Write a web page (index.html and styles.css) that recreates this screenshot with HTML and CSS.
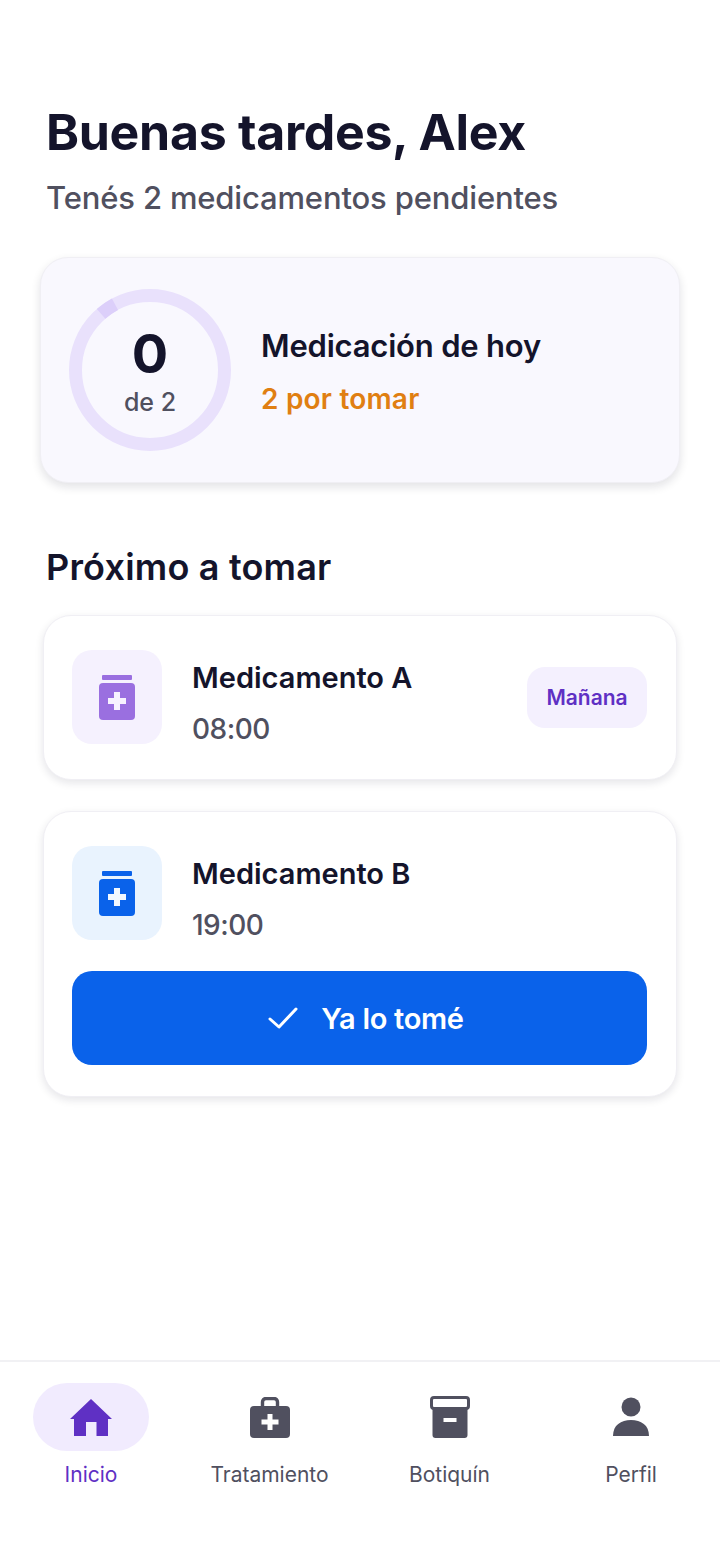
FILE: index.html
```html
<!DOCTYPE html>
<html lang="es">

<head>
  <meta charset="UTF-8" />
  <meta name="viewport" content="width=device-width, initial-scale=1.0" />
  <title>Inicio</title>
  <link rel="stylesheet" href="styles.css">
</head>

<body>
  <div class="page">
    <main class="main">
      <header class="header">
        <h1>Buenas tardes, Alex</h1>
        <p class="subtitle">Tenés 2 medicamentos pendientes</p>
      </header>

      <section class="summary">
        <div class="ring">
          <svg class="ring-svg" viewBox="0 0 162 162" width="162" height="162">
            <circle cx="81" cy="81" r="74.5" fill="none" stroke="#e9e1fc" stroke-width="13" />
            <path d="M32.1 24.8 A74.5 74.5 0 0 1 46 15.2" fill="none" stroke="#dccffa" stroke-width="13" />
          </svg>
          <div class="ring-text">
            <span class="ring-num">0</span>
            <span class="ring-of">de 2</span>
          </div>
        </div>
        <div class="summary-text">
          <h2>Medicación de hoy</h2>
          <p class="pending">2 por tomar</p>
        </div>
      </section>

      <h2 class="section-title">Próximo a tomar</h2>

      <section class="card">
        <div class="med">
          <div class="med-icon purple">
            <svg viewBox="0 0 36 46" width="36" height="46">
              <rect x="3" y="1" width="30" height="5" rx="1" fill="#9a6fe0" />
              <rect x="0" y="9" width="36" height="37" rx="4" fill="#9a6fe0" />
              <path d="M15 18h6v6h6v6h-6v6h-6v-6H9v-6h6z" fill="#f7f2ff" />
            </svg>
          </div>
          <div class="med-info">
            <div class="med-name">Medicamento A</div>
            <div class="med-time">08:00</div>
          </div>
          <span class="tag">Mañana</span>
        </div>
      </section>

      <section class="card with-action">
        <div class="med">
          <div class="med-icon blue">
            <svg viewBox="0 0 36 46" width="36" height="46">
              <rect x="3" y="1" width="30" height="5" rx="1" fill="#0a62ea" />
              <rect x="0" y="9" width="36" height="37" rx="4" fill="#0a62ea" />
              <path d="M15 18h6v6h6v6h-6v6h-6v-6H9v-6h6z" fill="#f2f8ff" />
            </svg>
          </div>
          <div class="med-info">
            <div class="med-name">Medicamento B</div>
            <div class="med-time">19:00</div>
          </div>
        </div>
        <button class="done">
          <svg viewBox="0 0 30 24" width="30" height="24">
            <path d="M2 13l9 8L28 3" fill="none" stroke="#fff" stroke-width="3" stroke-linecap="round" stroke-linejoin="round" />
          </svg>
          Ya lo tomé
        </button>
      </section>
    </main>

    <nav class="nav">
      <a class="nav-item active">
        <span class="nav-icon">
          <svg viewBox="0 0 42 37" width="42" height="37">
            <path d="M21 0L42 20H38V37H26.5V23H16V37H4V20H0z" fill="#5f30c4" />
          </svg>
        </span>
        Inicio
      </a>
      <a class="nav-item">
        <span class="nav-icon">
          <svg viewBox="0 0 40 41" width="40" height="41">
            <path d="M12.5 10V5a3.5 3.5 0 0 1 3.5-3.5h8a3.5 3.5 0 0 1 3.5 3.5v5" fill="none" stroke="#50505f" stroke-width="3.4" />
            <rect x="0" y="9" width="40" height="32" rx="4" fill="#50505f" />
            <path d="M17.5 17h5v5.5h6v5h-6V33h-5v-5.5h-6v-5h6z" fill="#fff" />
          </svg>
        </span>
        Tratamiento
      </a>
      <a class="nav-item">
        <span class="nav-icon">
          <svg viewBox="0 0 40 42" width="40" height="42">
            <rect x="1.5" y="1.5" width="37" height="11" rx="2.5" fill="#fff" stroke="#50505f" stroke-width="3" />
            <path d="M2.5 13h35v26a3 3 0 0 1-3 3h-29a3 3 0 0 1-3-3z" fill="#50505f" />
            <rect x="13.5" y="22" width="13" height="4" fill="#fff" />
          </svg>
        </span>
        Botiquín
      </a>
      <a class="nav-item">
        <span class="nav-icon">
          <svg viewBox="0 0 36 40" width="36" height="40">
            <circle cx="18" cy="10" r="9.5" fill="#50505f" />
            <path d="M0 39c0-11 8-16 18-16s18 5 18 16z" fill="#50505f" />
          </svg>
        </span>
        Perfil
      </a>
    </nav>
  </div>
</body>

</html>
```

FILE: styles.css
```css
* {
  box-sizing: border-box;
}

body {
  margin: 0;
  font-family: Inter, "Noto Sans", sans-serif;
  background: #fff;
  color: #14142b;
}

h1,
h2,
p {
  margin: 0;
}

.page {
  height: 1560px;
  display: flex;
  flex-direction: column;
}

.main {
  flex: 1;
  padding: 102px 43px 0;
}

.header {
  margin-left: 3px;
}

h1 {
  font-size: 50px;
  line-height: 60px;
  font-weight: 700;
  letter-spacing: -0.3px;
}

.subtitle {
  margin-top: 18px;
  font-size: 31px;
  line-height: 36px;
  font-weight: 500;
  letter-spacing: -0.16px;
  color: #50505f;
}

.summary {
  height: 226px;
  margin: 41px -3px 0;
  padding: 0 28px;
  display: flex;
  align-items: center;
  gap: 30px;
  background: #f9f8fe;
  border: 1px solid #f0eff4;
  border-radius: 28px;
  box-shadow: 0 4px 10px rgba(20, 20, 43, 0.12);
}

.ring {
  position: relative;
  width: 162px;
  height: 162px;
  flex: none;
}

.ring-svg {
  display: block;
}

.ring-text {
  position: absolute;
  inset: 0;
  padding-top: 2px;
  display: flex;
  flex-direction: column;
  align-items: center;
  justify-content: center;
}

.ring-num {
  font-size: 54px;
  line-height: 58px;
  font-weight: 700;
}

.ring-of {
  margin-top: 4px;
  font-size: 25px;
  line-height: 30px;
  font-weight: 500;
  color: #50505f;
}

.summary-text {
  padding-top: 2px;
}

.summary-text h2 {
  font-size: 31px;
  line-height: 38px;
  font-weight: 600;
  letter-spacing: -0.2px;
}

.pending {
  margin-top: 17px;
  font-size: 28px;
  line-height: 34px;
  font-weight: 600;
  letter-spacing: 0.2px;
  color: #e07f12;
}

.section-title {
  margin: 63px 0 27px 3px;
  font-size: 36px;
  line-height: 42px;
  font-weight: 600;
  letter-spacing: 0.2px;
}

.card {
  margin-bottom: 31px;
  padding: 34px 29px 35px 28px;
  background: #fff;
  border: 1px solid #f0eff4;
  border-radius: 28px;
  box-shadow: 0 3px 8px rgba(20, 20, 43, 0.11);
}

.card.with-action {
  padding-bottom: 31px;
}

.med {
  display: flex;
  align-items: center;
}

.med-icon {
  width: 90px;
  height: 94px;
  flex: none;
  display: flex;
  align-items: center;
  justify-content: center;
  border-radius: 20px;
}

.med-icon.purple {
  background: #f5f1fe;
}

.med-icon.blue {
  background: #e9f3fe;
}

.med-info {
  flex: 1;
  margin-left: 30px;
  padding-top: 12px;
}

.med-name {
  font-size: 29px;
  line-height: 30px;
  font-weight: 600;
}

.med-time {
  margin-top: 21px;
  font-size: 28px;
  line-height: 30px;
  font-weight: 500;
  letter-spacing: -0.5px;
  color: #50505f;
}

.tag {
  width: 120px;
  height: 61px;
  display: flex;
  align-items: center;
  justify-content: center;
  background: #f4f0fe;
  border-radius: 18px;
  font-size: 21px;
  font-weight: 600;
  color: #5f30c4;
}

.done {
  width: 100%;
  height: 94px;
  margin-top: 31px;
  padding-left: 19px;
  display: flex;
  align-items: center;
  justify-content: center;
  gap: 23px;
  background: #0a62ea;
  color: #fff;
  border: none;
  border-radius: 20px;
  font-family: inherit;
  font-size: 29px;
  font-weight: 600;
  letter-spacing: -0.3px;
}

.nav {
  height: 200px;
  display: grid;
  grid-template-columns: 182px 175px 185px 178px;
  padding-top: 21px;
  border-top: 2px solid #f1f1f4;
}

.nav-item {
  display: flex;
  flex-direction: column;
  align-items: center;
  font-size: 21px;
  line-height: 28px;
  color: #50505f;
}

.nav-icon {
  width: 116px;
  height: 68px;
  margin-bottom: 10px;
  display: flex;
  align-items: center;
  justify-content: center;
  border-radius: 34px;
}

.nav-item.active {
  color: #5f30c4;
}

.nav-item.active .nav-icon {
  background: #f1ebfe;
}
```
